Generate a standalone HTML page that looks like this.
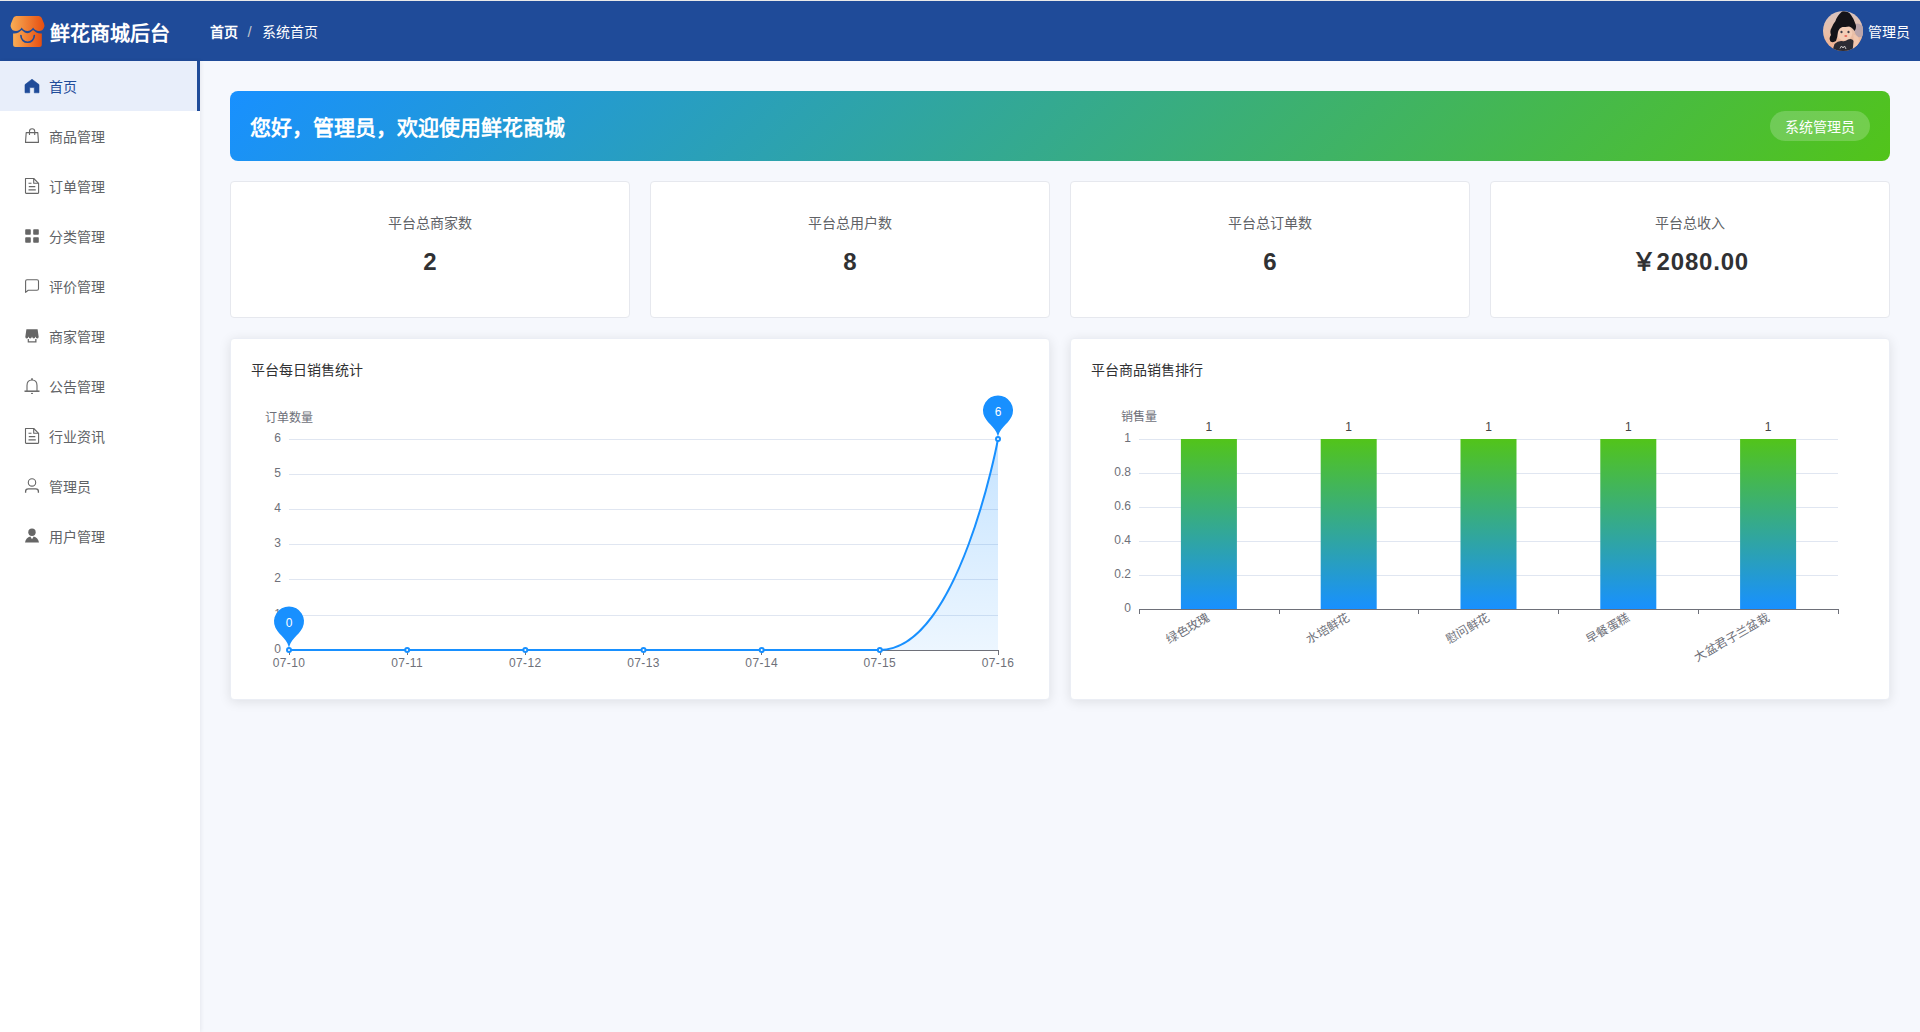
<!DOCTYPE html>
<html lang="zh-CN"><head><meta charset="utf-8">
<style>
*{box-sizing:border-box;margin:0;padding:0}
html,body{width:1920px;height:1032px;overflow:hidden}
body{position:relative;background:#f6f8fd;font-family:"Liberation Sans",sans-serif;color:#303133}
.abs{position:absolute}
#topline{left:0;top:0;width:1920px;height:1px;background:#e9e9e9}
#header{left:0;top:1px;width:1920px;height:60px;background:#1f4b99}
#title{left:50px;top:18.5px;font-size:20px;font-weight:bold;color:#fff;line-height:30px;white-space:nowrap}
#bc{left:210px;top:21.5px;font-size:14px;line-height:20px;color:#fff;white-space:nowrap}
#bc b{font-weight:bold}
#bc .sep{color:#c0c4cc;margin:0 10.5px 0 9.5px;font-size:15px}
#avatar{left:1823px;top:11px;width:40px;height:40px;border-radius:50%;overflow:hidden}
#uname{left:1868px;top:22px;font-size:14px;line-height:20px;color:#fff;white-space:nowrap}
#sidebar{left:0;top:61px;width:200px;height:971px;background:#fff;box-shadow:1px 0 4px rgba(0,21,41,.07)}
.mi{position:absolute;left:0;width:200px;height:50px}
.mi.act{background:#e8eefa;border-right:3px solid #1f4b99}
.mi svg{position:absolute;left:24px;top:17px;width:16px;height:16px}
.mi span{position:absolute;left:49px;top:15.5px;font-size:14px;line-height:20px;color:#606266;white-space:nowrap}
.mi.act span{color:#1f4b99}
#banner{left:230px;top:91px;width:1660px;height:70px;border-radius:8px;background:linear-gradient(135deg,#1890ff,#52c41a)}
#banner .t{position:absolute;left:20px;top:21.5px;font-size:21px;line-height:30px;font-weight:bold;color:#fff;white-space:nowrap}
#banner .pill{position:absolute;left:1540px;top:20px;width:100px;height:30px;border-radius:15px;background:rgba(255,255,255,.2);color:#fff;font-size:14px;line-height:30px;padding-top:1px;text-align:center}
.card{position:absolute;top:181px;width:400px;height:137px;background:#fff;border:1px solid #e6e8ee;border-radius:4px;text-align:center}
.card .l{position:absolute;left:0;right:0;top:31px;font-size:14px;line-height:20px;color:#606266}
.card .v{position:absolute;left:0;right:0;top:63px;font-size:24px;line-height:34px;font-weight:bold;color:#303133;letter-spacing:0.8px;text-indent:0.8px}
.pcard{position:absolute;top:338px;width:820px;height:362px;background:#fff;border:1px solid #ebeef5;border-radius:4px;box-shadow:0 2px 12px 0 rgba(0,0,0,.1)}
.pcard .h{position:absolute;left:20px;top:21px;font-size:14px;line-height:20px;color:#303133;white-space:nowrap}
#charts{left:0;top:0;width:1920px;height:1032px}
</style></head>
<body>
<div id="topline" class="abs"></div>
<div id="header" class="abs">
</div>
<svg class="abs" style="left:0;top:0" width="60" height="60" viewBox="0 0 60 60">
<defs><linearGradient id="lg" x1="0" y1="0" x2="1" y2="0"><stop offset="0" stop-color="#f9ad55"/><stop offset="1" stop-color="#e64e10"/></linearGradient></defs>
<path fill="url(#lg)" d="M16.5 16 H38.5 Q40.6 16 41.6 17.8 L44 23.5 Q44.8 25.5 44 27.5 Q42.8 31 39 31 Q35 31 33.1 27.6 Q31.2 31 27.4 31 Q23.6 31 21.7 27.6 Q19.8 31 16 31 Q12 31 11 27.5 Q10.3 25.5 11 23.5 L13.4 17.8 Q14.4 16 16.5 16 Z"/>
<path fill="url(#lg)" d="M13.1 33.5 Q16 33.8 18.5 32.5 L21.7 30 L24.8 32.5 Q27.4 33.8 30 32.5 L33.1 30 L36.3 32.5 Q38.8 33.8 41.8 33.5 V44.5 Q41.8 47 39.3 47 H15.6 Q13.1 47 13.1 44.5 Z"/>
<path fill="none" stroke="#1f4b99" stroke-width="1.6" stroke-linecap="round" d="M20.9 35.6 A6.7 6.7 0 0 0 34.3 35.6"/>
</svg>
<div id="title" class="abs">鲜花商城后台</div>
<div id="bc" class="abs"><b>首页</b><span class="sep">/</span>系统首页</div>
<svg class="abs" style="left:1823px;top:11px" width="40" height="40" viewBox="0 0 40 40">
<defs><clipPath id="ac"><circle cx="20" cy="20" r="20"/></clipPath>
<linearGradient id="avg" x1="0" y1="0" x2="0" y2="1"><stop offset="0" stop-color="#d6c2bf"/><stop offset="0.55" stop-color="#e9bfa8"/><stop offset="1" stop-color="#f2ad8a"/></linearGradient></defs>
<g clip-path="url(#ac)">
<rect width="40" height="40" fill="url(#avg)"/>
<path d="M31 14 Q35 11 38 14 Q42 16 41 22 Q40 27 35 26 Q31 24 31 14 Z" fill="#bba5aa"/>
<ellipse cx="21.5" cy="22" rx="7.8" ry="7.6" fill="#f4cdb6"/>
<path d="M9 41 L11.5 33 Q15 29.5 19 30 Q22 31 25 28.5 Q28.5 27 31 30 L30.5 41 Z" fill="#2c2b33"/>
<path d="M19 0.5 Q25 -0.5 28 4 Q31 8 32.5 13 Q34 17 31.5 20 Q29 16 26 15.5 Q22 16 19.5 16 Q16 17 15 21 Q14.5 26 13 30 Q10 32 7.5 30.5 Q5.5 27 8 24 Q6.5 20 8.5 17 Q10 13 12.5 10 Q14 5 19 0.5 Z" fill="#141318"/>
<path d="M30.5 24 Q34 23.5 35.5 27 Q36.5 31 35 36 L33 41 L29.5 41 L30.5 31 Z" fill="#f1c6ae"/>
<ellipse cx="18.5" cy="21" rx="1.1" ry="1.3" fill="#3c3b45"/><ellipse cx="25.5" cy="21" rx="1.1" ry="1.3" fill="#3c3b45"/>
<ellipse cx="22.8" cy="25" rx="1.5" ry="0.9" fill="#e8685a"/>
<path d="M17 37.5 L18.5 35 L20 37 L21.5 35 L23 38" fill="none" stroke="#d8d4d4" stroke-width="0.9"/>
</g></svg>
<div id="uname" class="abs">管理员</div>

<div id="sidebar" class="abs">
<div class="mi act" style="top:0"><span>首页</span></div>
<div class="mi" style="top:50px"><span>商品管理</span></div>
<div class="mi" style="top:100px"><span>订单管理</span></div>
<div class="mi" style="top:150px"><span>分类管理</span></div>
<div class="mi" style="top:200px"><span>评价管理</span></div>
<div class="mi" style="top:250px"><span>商家管理</span></div>
<div class="mi" style="top:300px"><span>公告管理</span></div>
<div class="mi" style="top:350px"><span>行业资讯</span></div>
<div class="mi" style="top:400px"><span>管理员</span></div>
<div class="mi" style="top:450px"><span>用户管理</span></div>
</div>
<svg id="icons" class="abs" style="left:0;top:0" width="200" height="560" viewBox="0 0 200 560">
<path d="M25 84.6 L32 79.2 L39 84.6 V92.8 H34.3 V87.6 H29.7 V92.8 H25 Z" fill="#1f4b99" stroke="#1f4b99" stroke-width="0.6" stroke-linejoin="round"/>
<g fill="none" stroke="#666" stroke-width="1.1" stroke-linejoin="round">
<path d="M26.2 132.6 H37.8 L38.5 142.4 H25.5 Z"/>
<path d="M29.5 135 V131.3 A2.6 2.6 0 0 1 34.7 131.3 V135"/>
<path d="M25.5 178.5 H33.7 L38.6 183.3 V192.8 A0.6 0.6 0 0 1 38 193.4 H26.1 A0.6 0.6 0 0 1 25.5 192.8 Z"/>
<path d="M33.7 178.6 V183.3 H38.5"/>
<path d="M28.5 183.3 H31.5 M28.8 186.6 H35.3 M28.5 189.9 H35.8"/>
<path d="M27 279.8 H37 A1.5 1.5 0 0 1 38.5 281.3 V288.8 A1.5 1.5 0 0 1 37 290.3 H28.2 L25.6 292.4 V281.3 A1.5 1.5 0 0 1 27 279.8 Z"/>
<path d="M32 380 C28.6 380 27 382.6 27 385.5 V391 M32 380 C35.4 380 37 382.6 37 385.5 V391"/>
<path d="M24.5 391.2 H39.5" stroke-width="1.5"/>
<path d="M32 378.2 V380" stroke-width="1.6"/>
<path d="M31 393.4 H33" stroke-width="1"/>
<g transform="translate(0,250)"><path d="M25.5 178.5 H33.7 L38.6 183.3 V192.8 A0.6 0.6 0 0 1 38 193.4 H26.1 A0.6 0.6 0 0 1 25.5 192.8 Z"/>
<path d="M33.7 178.6 V183.3 H38.5"/>
<path d="M28.5 183.3 H31.5 M28.8 186.6 H35.3 M28.5 189.9 H35.8"/></g>
<circle cx="32" cy="482.4" r="3.7"/>
<path d="M25.6 492.8 V491.5 A2.6 2.6 0 0 1 28.2 488.9 H35.8 A2.6 2.6 0 0 1 38.4 491.5 V492.8" stroke-width="1.3"/>
</g>
<g fill="#666">
<rect x="25.2" y="229.2" width="5.6" height="5.6" rx="0.8"/>
<rect x="33.2" y="229.2" width="5.6" height="5.6" rx="0.8"/>
<rect x="25.2" y="237.2" width="5.6" height="5.6" rx="0.8"/>
<rect x="33.2" y="237.2" width="5.6" height="5.6" rx="0.8"/>
<path d="M26.4 329.3 H37.6 L38.7 337 Q38.4 338.5 37.1 338.5 Q35.9 338.5 35.5 336.6 Q35.1 338.5 33.8 338.5 Q32.4 338.5 32 336.6 Q31.6 338.5 30.2 338.5 Q28.9 338.5 28.5 336.6 Q28.1 338.5 26.9 338.5 Q25.6 338.5 25.3 337 Z"/>
<path d="M27.7 339 H28.9 V341.3 H35.2 V339 H36.5 V342.6 H27.7 Z"/>
<circle cx="32" cy="532.3" r="3.7"/>
<path d="M30.3 536.6 L32 539.3 L33.7 536.6 C36.5 537 38.4 539.5 39 542.6 H25 C25.6 539.5 27.5 537 30.3 536.6 Z"/>
</g>
</svg>

<div id="banner" class="abs"><div class="t">您好，管理员，欢迎使用鲜花商城</div><div class="pill">系统管理员</div></div>

<div class="card" style="left:230px"><div class="l">平台总商家数</div><div class="v">2</div></div>
<div class="card" style="left:650px"><div class="l">平台总用户数</div><div class="v">8</div></div>
<div class="card" style="left:1070px"><div class="l">平台总订单数</div><div class="v">6</div></div>
<div class="card" style="left:1490px"><div class="l">平台总收入</div><div class="v">￥2080.00</div></div>

<div class="pcard" style="left:230px"><div class="h">平台每日销售统计</div></div>
<div class="pcard" style="left:1070px"><div class="h">平台商品销售排行</div></div>

<!--CHARTS-->
<svg id="charts" class="abs" width="1920" height="1032" viewBox="0 0 1920 1032">
<line x1="289.0" y1="615.50" x2="998.0" y2="615.50" stroke="#E0E6F1" stroke-width="1"/>
<line x1="289.0" y1="579.50" x2="998.0" y2="579.50" stroke="#E0E6F1" stroke-width="1"/>
<line x1="289.0" y1="544.50" x2="998.0" y2="544.50" stroke="#E0E6F1" stroke-width="1"/>
<line x1="289.0" y1="509.50" x2="998.0" y2="509.50" stroke="#E0E6F1" stroke-width="1"/>
<line x1="289.0" y1="474.50" x2="998.0" y2="474.50" stroke="#E0E6F1" stroke-width="1"/>
<line x1="289.0" y1="439.50" x2="998.0" y2="439.50" stroke="#E0E6F1" stroke-width="1"/>
<line x1="289.0" y1="650.5" x2="998.0" y2="650.5" stroke="#6E7079" stroke-width="1"/>
<line x1="289.50" y1="650.0" x2="289.50" y2="655.0" stroke="#6E7079" stroke-width="1"/>
<line x1="407.50" y1="650.0" x2="407.50" y2="655.0" stroke="#6E7079" stroke-width="1"/>
<line x1="525.50" y1="650.0" x2="525.50" y2="655.0" stroke="#6E7079" stroke-width="1"/>
<line x1="643.50" y1="650.0" x2="643.50" y2="655.0" stroke="#6E7079" stroke-width="1"/>
<line x1="761.50" y1="650.0" x2="761.50" y2="655.0" stroke="#6E7079" stroke-width="1"/>
<line x1="880.50" y1="650.0" x2="880.50" y2="655.0" stroke="#6E7079" stroke-width="1"/>
<line x1="998.50" y1="650.0" x2="998.50" y2="655.0" stroke="#6E7079" stroke-width="1"/>
<text x="281" y="653.30" text-anchor="end" font-size="12" fill="#6E7079" font-family="Liberation Sans, sans-serif">0</text>
<text x="281" y="618.30" text-anchor="end" font-size="12" fill="#6E7079" font-family="Liberation Sans, sans-serif">1</text>
<text x="281" y="582.30" text-anchor="end" font-size="12" fill="#6E7079" font-family="Liberation Sans, sans-serif">2</text>
<text x="281" y="547.30" text-anchor="end" font-size="12" fill="#6E7079" font-family="Liberation Sans, sans-serif">3</text>
<text x="281" y="512.30" text-anchor="end" font-size="12" fill="#6E7079" font-family="Liberation Sans, sans-serif">4</text>
<text x="281" y="477.30" text-anchor="end" font-size="12" fill="#6E7079" font-family="Liberation Sans, sans-serif">5</text>
<text x="281" y="442.30" text-anchor="end" font-size="12" fill="#6E7079" font-family="Liberation Sans, sans-serif">6</text>
<text x="289.00" y="666.50" text-anchor="middle" font-size="12" letter-spacing="0.4" fill="#6E7079" font-family="Liberation Sans, sans-serif">07-10</text>
<text x="407.17" y="666.50" text-anchor="middle" font-size="12" letter-spacing="0.4" fill="#6E7079" font-family="Liberation Sans, sans-serif">07-11</text>
<text x="525.33" y="666.50" text-anchor="middle" font-size="12" letter-spacing="0.4" fill="#6E7079" font-family="Liberation Sans, sans-serif">07-12</text>
<text x="643.50" y="666.50" text-anchor="middle" font-size="12" letter-spacing="0.4" fill="#6E7079" font-family="Liberation Sans, sans-serif">07-13</text>
<text x="761.67" y="666.50" text-anchor="middle" font-size="12" letter-spacing="0.4" fill="#6E7079" font-family="Liberation Sans, sans-serif">07-14</text>
<text x="879.83" y="666.50" text-anchor="middle" font-size="12" letter-spacing="0.4" fill="#6E7079" font-family="Liberation Sans, sans-serif">07-15</text>
<text x="998.00" y="666.50" text-anchor="middle" font-size="12" letter-spacing="0.4" fill="#6E7079" font-family="Liberation Sans, sans-serif">07-16</text>
<text x="289.0" y="421.5" text-anchor="middle" font-size="12" fill="#6E7079" font-family="Liberation Sans, sans-serif">订单数量</text>
<defs><linearGradient id="ag" x1="0" y1="0" x2="0" y2="1"><stop offset="0" stop-color="#1890ff" stop-opacity="0.25"/><stop offset="1" stop-color="#1890ff" stop-opacity="0.08"/></linearGradient><linearGradient id="bg" x1="0" y1="0" x2="0" y2="1"><stop offset="0" stop-color="#52c41a"/><stop offset="1" stop-color="#1890ff"/></linearGradient></defs>
<path d="M879.83 650.0 C958.9 650.0 998.0 439.0 998.0 439.0 L998.0 650.0 Z" fill="url(#ag)"/>
<path d="M289.0 650.0 L879.83 650.0 C958.9 650.0 998.0 439.0 998.0 439.0" fill="none" stroke="#1890ff" stroke-width="2"/>
<circle cx="289.00" cy="650.0" r="2" fill="#fff" stroke="#1890ff" stroke-width="2"/>
<circle cx="407.17" cy="650.0" r="2" fill="#fff" stroke="#1890ff" stroke-width="2"/>
<circle cx="525.33" cy="650.0" r="2" fill="#fff" stroke="#1890ff" stroke-width="2"/>
<circle cx="643.50" cy="650.0" r="2" fill="#fff" stroke="#1890ff" stroke-width="2"/>
<circle cx="761.67" cy="650.0" r="2" fill="#fff" stroke="#1890ff" stroke-width="2"/>
<circle cx="879.83" cy="650.0" r="2" fill="#fff" stroke="#1890ff" stroke-width="2"/>
<circle cx="998.00" cy="439.0" r="2" fill="#fff" stroke="#1890ff" stroke-width="2"/>
<path d="M275.45 627.86 A15.0 15.0 0 1 1 302.55 627.86 C298.70 635.99 289.0 639.50 289.0 650.0 C289.0 639.50 279.30 635.99 275.45 627.86 Z" fill="#1890ff"/>
<text x="289.0" y="626.50" text-anchor="middle" font-size="12" fill="#fff" font-family="Liberation Sans, sans-serif">0</text>
<path d="M984.45 416.86 A15.0 15.0 0 1 1 1011.55 416.86 C1007.70 424.99 998.0 428.50 998.0 439.0 C998.0 428.50 988.30 424.99 984.45 416.86 Z" fill="#1890ff"/>
<text x="998.0" y="415.50" text-anchor="middle" font-size="12" fill="#fff" font-family="Liberation Sans, sans-serif">6</text>
<line x1="1139.0" y1="575.50" x2="1838.0" y2="575.50" stroke="#E0E6F1" stroke-width="1"/>
<line x1="1139.0" y1="541.50" x2="1838.0" y2="541.50" stroke="#E0E6F1" stroke-width="1"/>
<line x1="1139.0" y1="507.50" x2="1838.0" y2="507.50" stroke="#E0E6F1" stroke-width="1"/>
<line x1="1139.0" y1="473.50" x2="1838.0" y2="473.50" stroke="#E0E6F1" stroke-width="1"/>
<line x1="1139.0" y1="439.50" x2="1838.0" y2="439.50" stroke="#E0E6F1" stroke-width="1"/>
<line x1="1139.0" y1="609.5" x2="1838.0" y2="609.5" stroke="#6E7079" stroke-width="1"/>
<line x1="1139.50" y1="609.0" x2="1139.50" y2="614.0" stroke="#6E7079" stroke-width="1"/>
<line x1="1279.50" y1="609.0" x2="1279.50" y2="614.0" stroke="#6E7079" stroke-width="1"/>
<line x1="1418.50" y1="609.0" x2="1418.50" y2="614.0" stroke="#6E7079" stroke-width="1"/>
<line x1="1558.50" y1="609.0" x2="1558.50" y2="614.0" stroke="#6E7079" stroke-width="1"/>
<line x1="1698.50" y1="609.0" x2="1698.50" y2="614.0" stroke="#6E7079" stroke-width="1"/>
<line x1="1838.50" y1="609.0" x2="1838.50" y2="614.0" stroke="#6E7079" stroke-width="1"/>
<text x="1131" y="612.30" text-anchor="end" font-size="12" fill="#6E7079" font-family="Liberation Sans, sans-serif">0</text>
<text x="1131" y="578.30" text-anchor="end" font-size="12" fill="#6E7079" font-family="Liberation Sans, sans-serif">0.2</text>
<text x="1131" y="544.30" text-anchor="end" font-size="12" fill="#6E7079" font-family="Liberation Sans, sans-serif">0.4</text>
<text x="1131" y="510.30" text-anchor="end" font-size="12" fill="#6E7079" font-family="Liberation Sans, sans-serif">0.6</text>
<text x="1131" y="476.30" text-anchor="end" font-size="12" fill="#6E7079" font-family="Liberation Sans, sans-serif">0.8</text>
<text x="1131" y="442.30" text-anchor="end" font-size="12" fill="#6E7079" font-family="Liberation Sans, sans-serif">1</text>
<text x="1139.0" y="421" text-anchor="middle" font-size="12" fill="#6E7079" font-family="Liberation Sans, sans-serif">销售量</text>
<rect x="1180.90" y="439.0" width="56" height="170.0" fill="url(#bg)"/>
<text x="1208.90" y="431.0" text-anchor="middle" font-size="12" fill="#444" font-family="Liberation Sans, sans-serif">1</text>
<text x="1208.90" y="621.00" text-anchor="end" font-size="12" fill="#6E7079" font-family="Liberation Sans, sans-serif" transform="rotate(-30 1208.90 617.00)">绿色玫瑰</text>
<rect x="1320.70" y="439.0" width="56" height="170.0" fill="url(#bg)"/>
<text x="1348.70" y="431.0" text-anchor="middle" font-size="12" fill="#444" font-family="Liberation Sans, sans-serif">1</text>
<text x="1348.70" y="621.00" text-anchor="end" font-size="12" fill="#6E7079" font-family="Liberation Sans, sans-serif" transform="rotate(-30 1348.70 617.00)">水培鲜花</text>
<rect x="1460.50" y="439.0" width="56" height="170.0" fill="url(#bg)"/>
<text x="1488.50" y="431.0" text-anchor="middle" font-size="12" fill="#444" font-family="Liberation Sans, sans-serif">1</text>
<text x="1488.50" y="621.00" text-anchor="end" font-size="12" fill="#6E7079" font-family="Liberation Sans, sans-serif" transform="rotate(-30 1488.50 617.00)">慰问鲜花</text>
<rect x="1600.30" y="439.0" width="56" height="170.0" fill="url(#bg)"/>
<text x="1628.30" y="431.0" text-anchor="middle" font-size="12" fill="#444" font-family="Liberation Sans, sans-serif">1</text>
<text x="1628.30" y="621.00" text-anchor="end" font-size="12" fill="#6E7079" font-family="Liberation Sans, sans-serif" transform="rotate(-30 1628.30 617.00)">早餐蛋糕</text>
<rect x="1740.10" y="439.0" width="56" height="170.0" fill="url(#bg)"/>
<text x="1768.10" y="431.0" text-anchor="middle" font-size="12" fill="#444" font-family="Liberation Sans, sans-serif">1</text>
<text x="1768.10" y="621.00" text-anchor="end" font-size="12" fill="#6E7079" font-family="Liberation Sans, sans-serif" transform="rotate(-30 1768.10 617.00)">大盆君子兰盆栽</text>
</svg>
<!--/CHARTS-->
</body></html>
